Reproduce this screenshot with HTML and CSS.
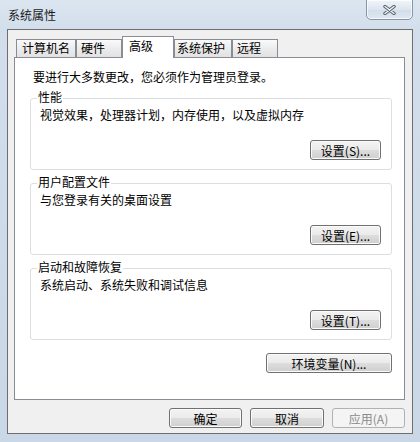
FILE: index.html
```html
<!DOCTYPE html>
<html lang="zh-CN">
<head>
<meta charset="utf-8">
<title>系统属性</title>
<link rel="stylesheet" href="styles.css">
</head>
<body>
<div class="window">
  <div class="titlebar">
    <span class="title">系统属性</span>
    <div class="close">
      <svg width="13" height="10" viewBox="0 0 13 10">
        <path d="M2 1.5 L11 8.5 M11 1.5 L2 8.5" stroke="#56616d" stroke-width="3.4" stroke-linecap="round" fill="none"/>
        <path d="M2 1.5 L11 8.5 M11 1.5 L2 8.5" stroke="#f4f7fa" stroke-width="1.4" stroke-linecap="round" fill="none"/>
      </svg>
    </div>
  </div>
  <div class="client">
    <div class="tabs">
      <div class="tab t-name">计算机名</div>
      <div class="tab t-hw">硬件</div>
      <div class="tab t-adv active">高级</div>
      <div class="tab t-prot">系统保护</div>
      <div class="tab t-remote">远程</div>
    </div>
    <div class="panel">
      <p class="intro">要进行大多数更改，您必须作为管理员登录。</p>
      <div class="group">
        <div class="legend">性能</div>
        <div class="desc">视觉效果，处理器计划，内存使用，以及虚拟内存</div>
        <div class="row"><button class="btn set">设置(S)...</button></div>
      </div>
      <div class="group">
        <div class="legend">用户配置文件</div>
        <div class="desc">与您登录有关的桌面设置</div>
        <div class="row"><button class="btn set">设置(E)...</button></div>
      </div>
      <div class="group">
        <div class="legend">启动和故障恢复</div>
        <div class="desc">系统启动、系统失败和调试信息</div>
        <div class="row"><button class="btn set">设置(T)...</button></div>
      </div>
      <div class="row env-row"><button class="btn env">环境变量(N)...</button></div>
    </div>
    <div class="footer">
      <button class="btn ok">确定</button>
      <button class="btn cancel">取消</button>
      <button class="btn apply" disabled>应用(A)</button>
    </div>
  </div>
</div>
</body>
</html>
```

FILE: styles.css
```css
* { box-sizing: border-box; }
html, body { margin: 0; padding: 0; }
body {
  width: 420px;
  height: 442px;
  overflow: hidden;
  background: #cad7e5;
  font-family: "Noto Sans CJK SC", "DejaVu Sans", sans-serif;
  font-size: 12px;
  color: #000;
}
.window {
  height: 442px;
  background: linear-gradient(#dce6f1 0px, #d2deeb 30px, #c9d7e6 442px);
}
.titlebar {
  height: 29px;
  display: flex;
  justify-content: space-between;
  align-items: center;
}
.title {
  padding-left: 8px;
  line-height: 16px;
  color: #1a1a1a;
}
.close {
  align-self: flex-start;
  margin-top: -1px;
  margin-right: 7px;
  width: 47px;
  height: 21px;
  border: 1px solid #8794a5;
  border-radius: 0 0 5px 5px;
  background: linear-gradient(#f1f5fa, #dce5f0 50%, #d2ddea 51%, #dfe8f2);
  box-shadow: inset 0 0 0 1px rgba(255,255,255,0.7);
  display: flex;
  align-items: center;
  justify-content: center;
  padding-top: 1px;
}
.client {
  margin: 0 7px;
  height: 405px;
  border: 1px solid #6e6e6e;
  background: #f0f0f0;
  padding: 6px 7px 0 6px;
}
.tabs {
  display: flex;
  align-items: flex-end;
  height: 21px;
  margin-left: 2px;
}
.tab {
  height: 18px;
  border: 1px solid #898c95;
  border-bottom: none;
  background: linear-gradient(#fafafa, #ececec 50%, #e2e2e2);
  line-height: 16px;
  padding-top: 0;
  white-space: nowrap;
}
.t-name { width: 60px; padding-left: 5px; }
.t-hw { width: 46px; padding-left: 4px; }
.t-prot { width: 58px; padding-left: 2px; }
.t-remote { width: 46px; padding-left: 4px; }
.tab.active {
  width: 52px;
  height: 22px;
  margin-bottom: -1px;
  position: relative;
  z-index: 1;
  background: #fff;
  padding-left: 6px;
  padding-top: 1px;
}
.panel {
  height: 343px;
  border: 1px solid #898c95;
  background: #fff;
  padding: 0 12px 0 15px;
}
.intro {
  margin: 11px 0 0 3px;
  line-height: 16px;
}
.group {
  margin-top: 13px;
  height: 72px;
  border: 1px solid #d9dfe3;
  border-radius: 3px;
  padding: 0 10px 0 9px;
}
.legend {
  margin-top: -10px;
  margin-left: -3px;
  padding: 0 1px;
  width: fit-content;
  background: #fff;
  line-height: 16px;
}
.desc {
  margin-top: 2px;
  line-height: 16px;
}
.row {
  display: flex;
  justify-content: flex-end;
  margin-top: 17px;
}
.env-row { margin-top: 13px; }
.btn {
  height: 20px;
  padding: 0;
  border: 1px solid #707070;
  border-radius: 3px;
  background: linear-gradient(#f3f3f3, #ebebeb 48%, #dddddd 52%, #cfcfcf);
  box-shadow: inset 0 0 0 1px #fbfbfb;
  font-family: "Noto Sans CJK SC", "DejaVu Sans", sans-serif;
  font-size: 12px;
  line-height: 17px;
  color: #000;
  text-align: center;
}
.set { width: 71px; }
.env { width: 126px; }
.footer {
  display: flex;
  justify-content: flex-end;
  gap: 8px;
  margin-top: 8px;
}
.ok { width: 73px; }
.cancel { width: 74px; }
.apply {
  width: 73px;
  border-color: #adb2b5;
  background: #f4f4f4;
  box-shadow: none;
  color: #8a8a8a;
}
```
